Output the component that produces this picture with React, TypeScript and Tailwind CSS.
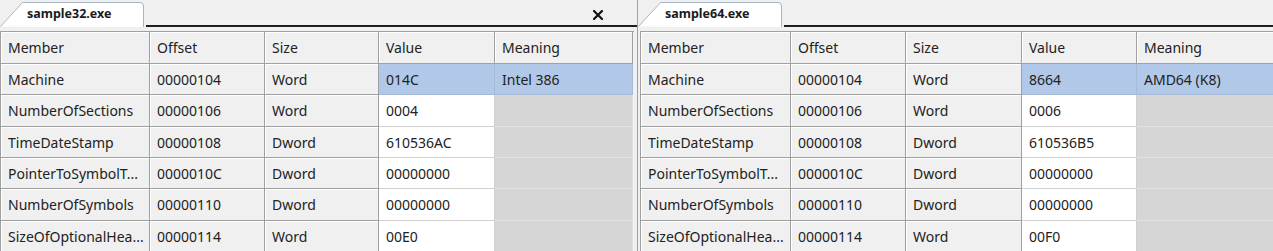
import React from "react";

type Row = { member: string; offset: string; size: string; value: string; meaning: string };

const rows32: Row[] = [
  { member: "Machine", offset: "00000104", size: "Word", value: "014C", meaning: "Intel 386" },
  { member: "NumberOfSections", offset: "00000106", size: "Word", value: "0004", meaning: "" },
  { member: "TimeDateStamp", offset: "00000108", size: "Dword", value: "610536AC", meaning: "" },
  { member: "PointerToSymbolT...", offset: "0000010C", size: "Dword", value: "00000000", meaning: "" },
  { member: "NumberOfSymbols", offset: "00000110", size: "Dword", value: "00000000", meaning: "" },
  { member: "SizeOfOptionalHea...", offset: "00000114", size: "Word", value: "00E0", meaning: "" },
];

const rows64: Row[] = [
  { member: "Machine", offset: "00000104", size: "Word", value: "8664", meaning: "AMD64 (K8)" },
  { member: "NumberOfSections", offset: "00000106", size: "Word", value: "0006", meaning: "" },
  { member: "TimeDateStamp", offset: "00000108", size: "Dword", value: "610536B5", meaning: "" },
  { member: "PointerToSymbolT...", offset: "0000010C", size: "Dword", value: "00000000", meaning: "" },
  { member: "NumberOfSymbols", offset: "00000110", size: "Dword", value: "00000000", meaning: "" },
  { member: "SizeOfOptionalHea...", offset: "00000114", size: "Word", value: "00F0", meaning: "" },
];

const heights = [31, 32, 31, 31, 32, 31];

function Tab({ label }: { label: string }) {
  return (
    <div className="relative h-[27px] w-[146px] shrink-0">
      <svg className="absolute left-0 top-0" width="146" height="27" viewBox="0 0 146 27">
        <path d="M0.5 26.5 L22.5 2.5 L140 2.5 Q143.5 2.5 143.5 6 L143.5 27" fill="#ffffff" stroke="#a9b5c7" strokeWidth="1" />
      </svg>
      <span className="absolute left-[27px] top-[6px] text-[12.5px] font-bold leading-[16px] text-[#1a1a1a]">
        {label}
      </span>
    </div>
  );
}

function Table({ rows, widths }: { rows: Row[]; widths: number[] }) {
  const headers = ["Member", "Offset", "Size", "Value", "Meaning"];
  const cols = widths.map((w) => `${w}px`).join(" ");
  const grayCell =
    "border-r border-b border-[#a0a0a0] bg-[#f0f0f0] shadow-[inset_1px_1px_0_#ffffff] pl-[7px] flex items-center whitespace-nowrap overflow-hidden";
  return (
    <div className="border-l border-t border-[#a0a0a0] bg-[#f0f0f0]">
      <div className="grid" style={{ gridTemplateColumns: cols }}>
        {headers.map((h) => (
          <div key={h} className={`${grayCell} h-[32px]`}>
            {h}
          </div>
        ))}
      </div>
      {rows.map((r, i) => {
        const sel = i === 0;
        return (
          <div key={r.member} className="grid" style={{ gridTemplateColumns: cols, height: heights[i] }}>
            <div className={grayCell}>{r.member}</div>
            <div className={grayCell}>{r.offset}</div>
            <div className={grayCell}>{r.size}</div>
            <div
              className={`flex items-center pl-[7px] border-r border-b ${
                sel ? "bg-[#b1c8e8] border-[#a6bad6]" : "bg-white border-[#d0d0d0]"
              }`}
            >
              {r.value}
            </div>
            <div
              className={`flex items-center pl-[7px] border-r border-b whitespace-nowrap ${
                sel ? "bg-[#b1c8e8] border-[#a6bad6]" : "bg-[#d6d6d6] border-[#e2e2e2]"
              }`}
            >
              {r.meaning}
            </div>
          </div>
        );
      })}
    </div>
  );
}

export default function App() {
  return (
    <div
      className="w-[1273px] h-[251px] overflow-hidden bg-[#f0f0f0] flex text-[14px] text-[#222222]"
      style={{ fontFamily: '"Noto Sans", "Open Sans", sans-serif' }}
    >
      <div className="w-[637px] shrink-0 flex flex-col">
        <div className="flex h-[27px]">
          <Tab label="sample32.exe" />
          <div className="flex-1 relative border-b-2 border-[#1e1e1e]">
            <svg
              className="absolute right-[34px] top-[10px]"
              width="10"
              height="10"
              viewBox="0 0 10 10"
              aria-label="close"
            >
              <path d="M1 1 L9 9 M9 1 L1 9" stroke="#111111" strokeWidth="2.2" strokeLinecap="square" />
            </svg>
          </div>
        </div>
        <div className="pt-[4px] pr-[3px]">
          <Table rows={rows32} widths={[149, 115, 114, 116, 138]} />
        </div>
      </div>
      <div className="flex-1 flex flex-col border-l border-[#a0a0a0]">
        <div className="flex h-[27px]">
          <Tab label="sample64.exe" />
          <div className="flex-1 border-b-2 border-[#1e1e1e]" />
        </div>
        <div className="pt-[4px] pl-[2px]">
          <Table rows={rows64} widths={[150, 115, 116, 115, 140]} />
        </div>
      </div>
    </div>
  );
}
